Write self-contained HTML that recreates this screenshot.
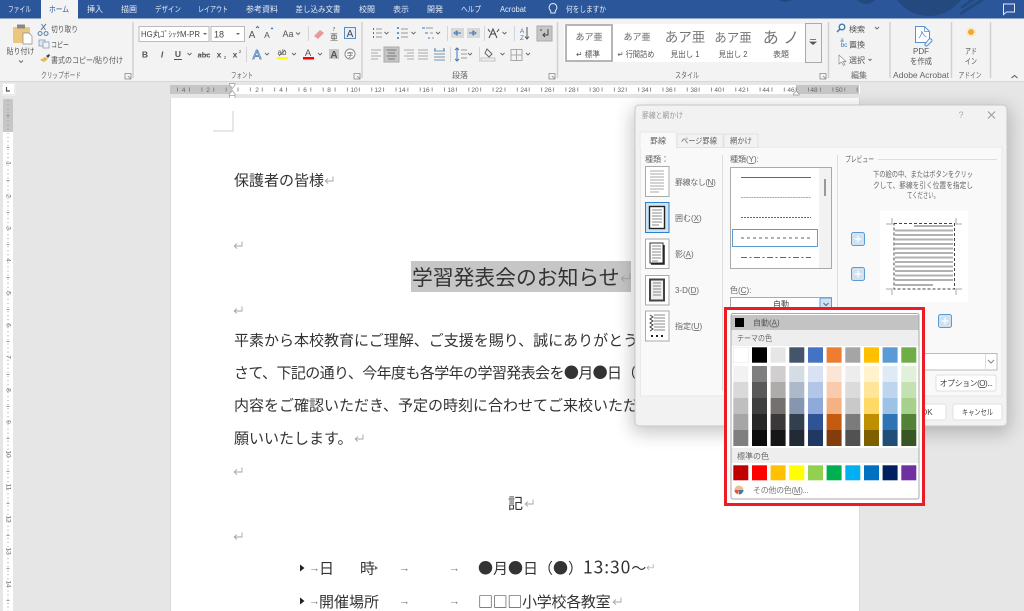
<!DOCTYPE html>
<html lang="ja"><head><meta charset="utf-8"><title>罫線と網かけ</title>
<style>
html,body{margin:0;padding:0;width:1024px;height:611px;overflow:hidden;background:#e6e6e6}
svg{display:block;font-family:"Liberation Sans","Noto Sans CJK JP",sans-serif;filter:blur(.3px)}
.tab{font-size:8px;fill:#e4eaf4;text-anchor:middle}
.r{font-size:8px;fill:#555}
.c{font-size:8px;fill:#555;text-anchor:middle}
.g{font-size:8px;fill:#666;text-anchor:middle}
.rn{font-size:6.5px;fill:#666;text-anchor:middle}
.b{font-size:15px;fill:#333;font-family:"Noto Sans CJK JP","Liberation Sans",sans-serif}
.d{font-size:8px;fill:#666}
.ic{fill:none;stroke:#6a7f9a;stroke-width:1}
.ch{fill:none;stroke:#666;stroke-width:.9}
.sep{stroke:#d4d4d4;stroke-width:1}
.gs{stroke:#d0d0d0;stroke-width:1.5}
.m{font-size:8px;fill:#666}
.ibx{fill:#fff;stroke:#aaa;stroke-width:1}
.ar{font-size:11px;fill:#777}
</style></head><body>
<svg width="1024" height="611" viewBox="0 0 1024 611" xmlns="http://www.w3.org/2000/svg">
<defs>
<pattern id="rt" x="232" y="85" width="24.27" height="9" patternUnits="userSpaceOnUse"><rect x="5.6" y="2.5" width=".8" height="4" fill="#777"/><rect x="18" y="2.5" width=".8" height="4" fill="#777"/></pattern>
<pattern id="vt" x="3" y="99" width="10" height="4.05" patternUnits="userSpaceOnUse"><rect x="4.5" y="1.5" width="1" height=".9" fill="#888"/></pattern>
<filter id="sh" x="-20%" y="-20%" width="140%" height="140%"><feGaussianBlur stdDeviation="9"/></filter>
<symbol id="ret" viewBox="0 0 10 10" overflow="visible"><path d="M9 1.5V6H1.2M4 3.4 1.2 6 4 8.6" fill="none" stroke="#a5a5a5" stroke-width=".9"/></symbol>
<symbol id="pv" viewBox="0 0 14 14"><rect x=".5" y=".5" width="13" height="13" rx="2" fill="#cfe2f3" stroke="#5b9bd5"/><path d="M3 3h8v8H3zM7 3v8M3 7h8" fill="none" stroke="#fff" stroke-width="1.2"/><path d="M3 3h8v8H3z" fill="none" stroke="#9db5cc" stroke-width=".5"/></symbol>
</defs>

<rect width="1024" height="611" fill="#e6e6e6"/>

<!-- title bar / tabs -->
<rect width="1024" height="18.5" fill="#2b579a"/>
<circle cx="929" cy="-24" r="40" fill="#24497f"/>
<circle cx="866" cy="-8" r="12" fill="#24497f"/>
<circle cx="785" cy="-10" r="12" fill="#24497f"/>
<path d="M985 -2 960 14M975 -2l-14 10" stroke="#24497f" stroke-width="3"/>
<rect x="41" y="0" width="37" height="19" fill="#f3f3f3"/>
<text x="19.500" y="12" class="tab" textLength="23" lengthAdjust="spacingAndGlyphs">ファイル</text>
<text x="59" y="12" class="tab" style="fill:#2b579a" textLength="20" lengthAdjust="spacingAndGlyphs">ホーム</text>
<text x="95" y="12" class="tab">挿入</text>
<text x="129" y="12" class="tab">描画</text>
<text x="168" y="12" class="tab" textLength="26" lengthAdjust="spacingAndGlyphs">デザイン</text>
<text x="213" y="12" class="tab" textLength="30" lengthAdjust="spacingAndGlyphs">レイアウト</text>
<text x="262" y="12" class="tab">参考資料</text>
<text x="318" y="12" class="tab" textLength="45" lengthAdjust="spacingAndGlyphs">差し込み文書</text>
<text x="367" y="12" class="tab">校閲</text>
<text x="401" y="12" class="tab">表示</text>
<text x="435" y="12" class="tab">開発</text>
<text x="471" y="12" class="tab" textLength="20" lengthAdjust="spacingAndGlyphs">ヘルプ</text>
<text x="513" y="12" class="tab" textLength="26" lengthAdjust="spacingAndGlyphs">Acrobat</text>
<path d="M553 3.500a4 4 0 0 1 2.500 7l-.5 2.500h-4l-.5-2.500a4 4 0 0 1 2.500-7z" fill="none" stroke="#e4eaf4"/>
<text x="566" y="12" class="tab" style="text-anchor:start" textLength="40" lengthAdjust="spacingAndGlyphs">何をしますか</text>
<path d="M1003.500 4h11v8h-8l-3 2.500z" fill="none" stroke="#e4eaf4"/>

<!-- ribbon -->
<rect y="18.500" width="1024" height="62.500" fill="#f3f3f3"/>
<rect y="81" width="1024" height="1" fill="#d8d8d8"/>

<!-- clipboard -->
<rect x="13" y="27" width="17" height="16" rx="1" fill="#ecc67f"/>
<rect x="17" y="24.500" width="8" height="4" fill="#888"/>
<path d="M23 33h6l3 3v8h-9z" fill="#fff" stroke="#888" stroke-width=".7"/>
<text x="20.500" y="54" class="c" textLength="28" lengthAdjust="spacingAndGlyphs">貼り付け</text>
<path d="M19 60.500l2 2 2-2" class="ch"/>
<path d="M40 31.500a2 2 0 1 0 .1 0zM46 31.500a2 2 0 1 0 .1 0M41 30l5-6M45.500 30l-4-6" fill="none" stroke="#5b7fa8"/>
<text x="51" y="32" class="r" textLength="27" lengthAdjust="spacingAndGlyphs">切り取り</text>
<rect x="39" y="40" width="6" height="6" fill="#dfe8f2" stroke="#7b93ad" stroke-width=".7"/><rect x="43" y="42" width="6" height="6" fill="#eef3f8" stroke="#7b93ad" stroke-width=".7"/>
<text x="51" y="47.500" class="r" textLength="18" lengthAdjust="spacingAndGlyphs">コピー</text>
<path d="M40 60l5-3 3 2-4 3z" fill="#e8b858"/><path d="M46 56l3-2 1 1.500-2 2.500z" fill="#444"/>
<text x="51" y="63" class="r" textLength="72" lengthAdjust="spacingAndGlyphs">書式のコピー/貼り付け</text>
<text x="61" y="78" class="g" textLength="40" lengthAdjust="spacingAndGlyphs">クリップボード</text>
<path d="M125 73.500h6v5.500h-6zM128 76l2.500 2.500" fill="none" stroke="#888" stroke-width=".8"/>
<line x1="133" y1="22" x2="133" y2="78" class="gs"/>

<!-- font -->
<rect x="139" y="26.500" width="70" height="15" fill="#fff" stroke="#bbb"/>
<text x="141" y="37" style="font-size:8px;fill:#444" textLength="59" lengthAdjust="spacingAndGlyphs">HG丸ｺﾞｼｯｸM-PR</text>
<path d="M203 33l2 2 2-2z" fill="#666"/>
<rect x="211" y="26.500" width="33.500" height="15" fill="#fff" stroke="#bbb"/>
<text x="214" y="37.500" style="font-size:9px;fill:#444">18</text>
<path d="M236 33l2 2 2-2z" fill="#666"/>
<text x="252" y="38" class="c" style="font-size:10px">A</text><path d="M256 28l1.500-1.500 1.500 1.500" stroke="#3a6ea5" fill="none"/>
<text x="267" y="38" class="c" style="font-size:8.5px">A</text><path d="M271 29l1-1 1 1" stroke="#3a6ea5" fill="none"/>
<text x="288" y="37" class="c" style="font-size:9px">Aa</text><path d="M296 32.500l2 2 2-2" class="ch"/>
<line x1="308.500" y1="26" x2="308.500" y2="41" class="sep"/>
<path d="M314 36l6-6 4 3-6 6z" fill="#e79a9a"/>
<text x="334" y="31" class="c" style="font-size:5px">ｱ</text><text x="334" y="40" class="c" style="font-size:8px">亜</text>
<rect x="344.500" y="27.500" width="11" height="11" fill="#e4eef8" stroke="#5b8ebf"/><text x="350" y="37" class="c" style="font-size:10px;fill:#444">A</text>
<text x="145" y="57.500" class="c" style="font-weight:bold;font-size:8.500px">B</text>
<text x="162" y="57.500" class="c" style="font-style:italic;font-weight:bold;font-size:8.500px">I</text>
<text x="178" y="57" class="c" style="font-weight:bold;font-size:8.500px">U</text><line x1="174" y1="59.500" x2="182" y2="59.500" stroke="#555"/>
<path d="M187.500 53l2 2 2-2" class="ch"/>
<text x="204" y="57.500" class="c" style="font-weight:bold;font-size:7.500px">abc</text><line x1="198" y1="54.500" x2="210" y2="54.500" stroke="#666" stroke-width=".7"/>
<text x="219" y="57.500" class="c" style="font-weight:bold;font-size:8.500px">x</text><text x="225" y="59" class="c" style="font-size:4.500px">2</text>
<text x="235" y="57.500" class="c" style="font-weight:bold;font-size:8.500px">x</text><text x="240" y="53" class="c" style="font-size:4.500px">2</text>
<line x1="246.500" y1="47" x2="246.500" y2="62" class="sep"/>
<text x="257" y="59" class="c" style="font-size:13px;fill:#fff;stroke:#4f81bd;stroke-width:.8">A</text><path d="M265 53l2 2 2-2" class="ch"/>
<text x="282" y="55" class="c" style="font-size:8px">ab</text><path d="M279 56l6-6" stroke="#555" stroke-width=".7"/><rect x="277" y="57" width="11" height="2.500" fill="#ff0"/><path d="M292 53l2 2 2-2" class="ch"/>
<text x="308" y="56" class="c" style="font-size:9.500px">A</text><rect x="303" y="57" width="11" height="2.500" fill="#f00"/><path d="M318 53l2 2 2-2" class="ch"/>
<rect x="329" y="49" width="10" height="10" fill="#c8c8c8"/><text x="334" y="58" class="c" style="font-size:10px;font-weight:bold;fill:#555">A</text>
<circle cx="350" cy="54" r="5" fill="#fff" stroke="#888"/><text x="350" y="57" class="c" style="font-size:6.500px">字</text>
<text x="242" y="78" class="g" textLength="22" lengthAdjust="spacingAndGlyphs">フォント</text>
<path d="M354 73.500h6v5.500h-6zM357 76l2.500 2.500" fill="none" stroke="#888" stroke-width=".8"/>
<line x1="362" y1="22" x2="362" y2="78" class="gs"/>

<!-- paragraph -->
<g stroke-width="1" fill="none">
<path d="M373 29h1M373 33h1M373 37h1" stroke="#3c78b4" stroke-width="2"/><path d="M376 29h6M376 33h6M376 37h6" stroke="#999"/>
<path d="M384.500 32l2 2 2-2" class="ch"/>
<path d="M397 28h2M397 33h2M397 38h2" stroke="#3c78b4" stroke-width="1.500"/><path d="M401 29h7M401 33h7M401 37h7" stroke="#999"/>
<path d="M411.500 32l2 2 2-2" class="ch"/>
<path d="M422 28h3M425 33h3M428 38h2" stroke="#3c78b4"/><path d="M426 28h7M430 33h3M432 38h2" stroke="#999"/>
<path d="M436 32l2 2 2-2" class="ch"/>
<rect x="451" y="28" width="13" height="10" fill="#d8d8d8"/><path d="M456 33h5M454 33l3-2v4z" stroke="#3c78b4"/>
<rect x="467" y="28" width="13" height="10" fill="#d8d8d8"/><path d="M469 33h5M476 33l-3-2v4z" stroke="#3c78b4"/>
<path d="M489 38l4-9 4 9M491 34h5M488 29l2 3M499 29l-2 3" stroke="#445"/>
<path d="M502.500 32l2 2 2-2" class="ch"/>
<line x1="447.500" y1="26" x2="447.500" y2="41" class="sep"/><line x1="484.500" y1="26" x2="484.500" y2="41" class="sep"/><line x1="514.500" y1="26" x2="514.500" y2="41" class="sep"/>
<path d="M527 27v12M525 36.500l2 2.500 2-2.500" stroke="#555"/>
</g>
<text x="522" y="33" class="c" style="font-size:6.500px;fill:#3c78b4">A</text><text x="522" y="40" class="c" style="font-size:6.500px;fill:#3c78b4">Z</text>
<rect x="537" y="26" width="15" height="15" fill="#c6c6c6" stroke="#aaa"/><path d="M548 29v6h-5M545 33l-2 2 2 2M541 29v2" fill="none" stroke="#444"/>
<rect x="384" y="47" width="15" height="15" fill="#c6c6c6" stroke="#aaa"/>
<g stroke="#a8a8a8" fill="none">
<path d="M371 50h10M371 53h7M371 56h10M371 59h7"/>
<path d="M386.500 50h10M388 53h7M386.500 56h10M388 59h7" stroke="#777"/>
<path d="M404 50h10M407 53h7M404 56h10M407 59h7"/>
<path d="M418 50h10M418 53h10M418 56h10M418 59h10"/>
<path d="M434 51h11M434 54h11M434 57h11M434 60h11" stroke="#7a93ad"/>
</g>
<path d="M435 48v3M444 48v3" stroke="#3c78b4"/>
<line x1="450.500" y1="47" x2="450.500" y2="62" class="sep"/>
<path d="M457 48v13M455 50l2-2 2 2M455 59l2 2 2-2" fill="none" stroke="#3c78b4"/><path d="M461 50h6M461 54h6M461 58h6" stroke="#999"/>
<path d="M468 53l2 2 2-2" class="ch"/>
<line x1="479.500" y1="47" x2="479.500" y2="62" class="sep"/>
<path d="M487 49l5 5-3 3-4-4z" fill="#f2f2f2" stroke="#666"/><path d="M481 58h14v3h-14z" fill="#eee" stroke="#c4c4c4"/>
<path d="M500.500 53l2 2 2-2" class="ch"/>
<path d="M511 49.500h11v11h-11zM516.500 49.500v11M511 55h11" fill="none" stroke="#aaa"/>
<path d="M526 53l2 2 2-2" class="ch"/>
<text x="460" y="78" class="g">段落</text>
<path d="M549 73.500h6v5.500h-6zM552 76l2.500 2.500" fill="none" stroke="#888" stroke-width=".8"/>
<line x1="557.500" y1="22" x2="557.500" y2="78" class="gs"/>

<!-- styles -->
<rect x="564" y="24" width="258" height="38" fill="#fff"/>
<rect x="566" y="25" width="46" height="36" fill="#fff" stroke="#b5b5b5" stroke-width="2"/>
<rect x="805.500" y="23.500" width="16" height="39" fill="#f3f3f3" stroke="#aaa"/>
<path d="M810 39.500h6M810 42l3 2.500 3-2.500z" fill="#555" stroke="#555" stroke-width=".8"/>
<text x="589" y="40" class="c" style="font-size:9px;fill:#666">あア亜</text>
<text x="637" y="40" class="c" style="font-size:9px;fill:#666">あア亜</text>
<text x="685" y="42" class="c" style="font-size:13.500px;fill:#777">あア亜</text>
<text x="733" y="42" class="c" style="font-size:12.500px;fill:#777">あア亜</text>
<text x="781" y="43" class="c" style="font-size:16px;fill:#777">あ ノ</text>
<text x="588" y="57" class="c" textLength="24" lengthAdjust="spacingAndGlyphs">↵ 標準</text>
<text x="636" y="57" class="c" textLength="37" lengthAdjust="spacingAndGlyphs">↵ 行間詰め</text>
<text x="685" y="57" class="c" textLength="29" lengthAdjust="spacingAndGlyphs">見出し 1</text>
<text x="733" y="57" class="c" textLength="29" lengthAdjust="spacingAndGlyphs">見出し 2</text>
<text x="781" y="57" class="c">表題</text>
<text x="687" y="78" class="g" textLength="24" lengthAdjust="spacingAndGlyphs">スタイル</text>
<path d="M820 73.500h6v5.500h-6zM823 76l2.500 2.500" fill="none" stroke="#888" stroke-width=".8"/>
<line x1="828.500" y1="22" x2="828.500" y2="78" class="gs"/>

<!-- editing -->
<circle cx="842" cy="27" r="2.800" fill="none" stroke="#3c78b4" stroke-width="1.300"/><path d="M840 29l-3 3" stroke="#3c78b4" stroke-width="1.500"/>
<text x="849" y="32" class="r">検索</text><path d="M875 27l2 2 2-2" class="ch"/>
<text x="842" y="42" class="c" style="font-size:6px;fill:#3c78b4">a</text><text x="844" y="47" class="c" style="font-size:6.500px;fill:#3c78b4">bc</text>
<text x="849" y="47.500" class="r">置換</text>
<path d="M839 55v9l2.500-2 2 3.500 1.500-1-2-3h3z" fill="#fff" stroke="#888" stroke-width=".7"/>
<text x="849" y="63" class="r">選択</text><path d="M868.500 59l1.500 1.500 1.500-1.500" class="ch"/>
<text x="859" y="78" class="g">編集</text>
<line x1="890" y1="22" x2="890" y2="78" class="gs"/>

<!-- pdf -->
<path d="M915.500 26.500h9l5 5v11h-14z" fill="#fff" stroke="#5b8fd0"/><path d="M924.500 26.500v5h5M919 38c2-2 3-6 2.500-7 1 2 2 5 5 6" fill="none" stroke="#5b8fd0" stroke-width=".8"/>
<path d="M925 44l4-5a2 2 0 0 1 3 2l-4 4a1.500 1.500 0 0 1-3-1z" fill="#f3f3f3" stroke="#5b8fd0"/>
<text x="921" y="54" class="c">PDF</text><text x="921" y="64" class="c" textLength="22" lengthAdjust="spacingAndGlyphs">を作成</text>
<text x="921" y="78" class="g" textLength="56" lengthAdjust="spacingAndGlyphs">Adobe Acrobat</text>
<line x1="951.500" y1="22" x2="951.500" y2="78" class="gs"/>

<!-- addin -->
<circle cx="971" cy="32" r="3" fill="#f5a623"/><circle cx="971" cy="32" r="4.200" fill="none" stroke="#f8cf88" stroke-dasharray="1 1"/>
<text x="971" y="54" class="c" textLength="12" lengthAdjust="spacingAndGlyphs">アド</text><text x="971" y="64" class="c" textLength="12" lengthAdjust="spacingAndGlyphs">イン</text>
<text x="970" y="78" class="g" textLength="23" lengthAdjust="spacingAndGlyphs">アドイン</text>
<line x1="990.500" y1="22" x2="990.500" y2="78" class="gs"/>
<path d="M1011.500 78l3-2.500 3 2.500" fill="none" stroke="#555"/>

<!-- rulers -->
<rect x="170" y="85" width="690" height="9" fill="#fff"/>
<rect x="170" y="85" width="62" height="9" fill="#c6c6c6"/>
<rect x="796" y="85" width="63" height="9" fill="#c6c6c6"/>
<rect x="171" y="85" width="688" height="9" fill="url(#rt)"/>
<text class="rn" x="183.500" y="92">4</text><text class="rn" x="208" y="92">2</text>
<text class="rn" x="257" y="92">2</text><text class="rn" x="281" y="92">4</text><text class="rn" x="305" y="92">6</text><text class="rn" x="329" y="92">8</text>
<text class="rn" x="354" y="92">10</text><text class="rn" x="378" y="92">12</text><text class="rn" x="402" y="92">14</text><text class="rn" x="426" y="92">16</text><text class="rn" x="451" y="92">18</text><text class="rn" x="475" y="92">20</text><text class="rn" x="499" y="92">22</text>
<text class="rn" x="524" y="92">24</text><text class="rn" x="548" y="92">26</text><text class="rn" x="572" y="92">28</text><text class="rn" x="596" y="92">30</text><text class="rn" x="621" y="92">32</text><text class="rn" x="645" y="92">34</text><text class="rn" x="669" y="92">36</text><text class="rn" x="694" y="92">38</text><text class="rn" x="718" y="92">40</text><text class="rn" x="742" y="92">42</text><text class="rn" x="766" y="92">44</text><text class="rn" x="791" y="92">46</text><text class="rn" x="814" y="92">48</text><text class="rn" x="839" y="92">50</text>
<path d="M229.500 83.500h5.500v1.500l-2.700 3.500-2.800-3.500zM229.500 94l2.800-3.500 2.700 3.500v5h-5.500z" fill="#fff" stroke="#999" stroke-width=".7"/>
<path d="M229.500 95.500h5.500" stroke="#999" stroke-width=".7"/>
<path d="M793.500 94l2.800-3 2.800 3v1h-5.600z" fill="#fff" stroke="#999" stroke-width=".7"/>

<rect x="2" y="83" width="14" height="13" fill="#ececec"/>
<rect x="3" y="84" width="11" height="10" fill="#fff"/>
<path d="M6.500 87v4h3.500" fill="none" stroke="#555" stroke-width="1.200"/>

<rect x="3" y="99" width="10" height="512" fill="#fff"/>
<rect x="3" y="99" width="10" height="33" fill="#c6c6c6"/>
<rect x="3" y="99" width="10" height="512" fill="url(#vt)"/>
<g fill="#888">
<rect x="6.500" y="115" width="3" height=".8"/><rect x="6.500" y="147" width="3" height=".8"/><rect x="6.500" y="180" width="3" height=".8"/><rect x="6.500" y="212" width="3" height=".8"/><rect x="6.500" y="244" width="3" height=".8"/><rect x="6.500" y="277" width="3" height=".8"/><rect x="6.500" y="309" width="3" height=".8"/><rect x="6.500" y="341" width="3" height=".8"/><rect x="6.500" y="374" width="3" height=".8"/><rect x="6.500" y="406" width="3" height=".8"/><rect x="6.500" y="438" width="3" height=".8"/><rect x="6.500" y="471" width="3" height=".8"/><rect x="6.500" y="503" width="3" height=".8"/><rect x="6.500" y="535" width="3" height=".8"/><rect x="6.500" y="568" width="3" height=".8"/><rect x="6.500" y="600" width="3" height=".8"/>
</g>
<text class="rn" transform="translate(6.500 163) rotate(90)" x="0" y="0">1</text>
<text class="rn" transform="translate(6.500 196) rotate(90)" x="0" y="0">2</text>
<text class="rn" transform="translate(6.500 228) rotate(90)" x="0" y="0">3</text>
<text class="rn" transform="translate(6.500 260) rotate(90)" x="0" y="0">4</text>
<text class="rn" transform="translate(6.500 293) rotate(90)" x="0" y="0">5</text>
<text class="rn" transform="translate(6.500 325) rotate(90)" x="0" y="0">6</text>
<text class="rn" transform="translate(6.500 357) rotate(90)" x="0" y="0">7</text>
<text class="rn" transform="translate(6.500 390) rotate(90)" x="0" y="0">8</text>
<text class="rn" transform="translate(6.500 422) rotate(90)" x="0" y="0">9</text>
<text class="rn" transform="translate(6.500 454) rotate(90)" x="0" y="0">10</text>
<text class="rn" transform="translate(6.500 487) rotate(90)" x="0" y="0">11</text>
<text class="rn" transform="translate(6.500 519) rotate(90)" x="0" y="0">12</text>
<text class="rn" transform="translate(6.500 551) rotate(90)" x="0" y="0">13</text>
<text class="rn" transform="translate(6.500 584) rotate(90)" x="0" y="0">14</text>

<!-- page -->
<rect x="170" y="98" width="690" height="513" fill="#d9d9d9"/>
<rect x="171" y="98" width="688" height="513" fill="#fff"/>
<path d="M213 131h20V111" fill="none" stroke="#cfcfcf"/>

<text x="234" y="185.500" class="b">保護者の皆様</text>
<use href="#ret" x="324" y="175" width="10" height="10"/>
<use href="#ret" x="233" y="240" width="10" height="10"/>
<rect x="411" y="261" width="220" height="31" fill="#c6c6c6"/>
<text x="412" y="285" class="b" style="font-size:20.800px">学習発表会のお知らせ</text>
<use href="#ret" x="620" y="272" width="11" height="11"/>
<use href="#ret" x="233" y="305" width="10" height="10"/>
<text x="234" y="345.500" class="b">平素から本校教育にご理解、ご支援を賜り、誠にありがとう</text>
<text x="234" y="378" class="b" style="letter-spacing:-.6px">さて、下記の通り、今年度も各学年の学習発表会を●月●日（</text>
<text x="234" y="410.500" class="b">内容をご確認いただき、予定の時刻に合わせてご来校いただ</text>
<text x="234" y="443.500" class="b">願いいたします。</text>
<use href="#ret" x="354" y="433" width="10" height="10"/>
<use href="#ret" x="233" y="466" width="10" height="10"/>
<text x="508" y="508.500" class="b">記</text>
<use href="#ret" x="524" y="498" width="10" height="10"/>
<use href="#ret" x="233" y="531" width="10" height="10"/>
<path d="M300 564.500l4.500 3.500-4.500 3.500z" fill="#222"/>
<text x="309" y="571.500" class="ar">→</text>
<text x="319" y="573.500" class="b">日</text><text x="360" y="573.500" class="b">時</text>
<path d="M375 566l3 2-3 2z" fill="#666"/>
<text x="399" y="571.500" class="ar">→</text>
<text x="449" y="571.500" class="ar">→</text>
<text x="478" y="573.500" class="b">●月●日（●）<tspan style="font-size:17.500px;letter-spacing:.9px">13:30</tspan>〜</text>
<use href="#ret" x="646" y="563" width="8" height="8"/>
<path d="M300 597.500l4.500 3.500-4.500 3.500z" fill="#222"/>
<text x="309" y="604.500" class="ar">→</text>
<text x="319" y="607" class="b">開催場所</text>
<text x="399" y="604.500" class="ar">→</text>
<text x="449" y="604.500" class="ar">→</text>
<text x="478" y="607" class="b" style="letter-spacing:-.3px">□□□小学校各教室</text>
<use href="#ret" x="612" y="596" width="10" height="10"/>

<!-- dialog -->
<rect x="632" y="108" width="378" height="325" rx="6" fill="#000" opacity=".22" filter="url(#sh)"/>
<rect x="635" y="105" width="372" height="321" rx="4" fill="#f2f2f2" stroke="#c8c8c8"/>
<text x="642" y="118" style="font-size:8px;fill:#999" textLength="41" lengthAdjust="spacingAndGlyphs">罫線と網かけ</text>
<text x="961" y="118" style="font-size:9px;fill:#aaa;text-anchor:middle">?</text>
<path d="M988 111.500l7 7M995 111.500l-7 7" stroke="#999" fill="none"/>
<rect x="640.500" y="147" width="361.500" height="249" fill="#f9f9f9" stroke="#e8e8e8"/>
<rect x="677" y="134" width="46" height="13.500" fill="#f2f2f2" stroke="#e2e2e2"/>
<rect x="724" y="134" width="34" height="13.500" fill="#f2f2f2" stroke="#e2e2e2"/>
<rect x="640" y="132" width="36.500" height="16" fill="#f9f9f9" stroke="#e8e8e8"/>
<rect x="640.500" y="146" width="35.500" height="3" fill="#f9f9f9"/>
<text x="658" y="143.500" class="d" style="text-anchor:middle">罫線</text>
<text x="699" y="143.500" class="d" style="text-anchor:middle" textLength="36" lengthAdjust="spacingAndGlyphs">ページ罫線</text>
<text x="741" y="143.500" class="d" style="text-anchor:middle" textLength="22" lengthAdjust="spacingAndGlyphs">網かけ</text>

<text x="645" y="162" class="d">種類：</text>
<rect x="645.500" y="166.500" width="23.500" height="30" class="ibx"/>
<path d="M650 171h14M650 174h14M650 177h14M650 180h14M650 183h14M650 186h14M650 189h14M650 192h9" stroke="#aaa"/>
<rect x="645.500" y="202.500" width="23.500" height="30" fill="#cce4f7" stroke="#2f80c8"/>
<rect x="649.500" y="206.500" width="15" height="22" fill="#fff" stroke="#222" stroke-width="1.400"/>
<path d="M652 210h10M652 213h10M652 216h10M652 219h10M652 222h10M652 225h7" stroke="#888"/>
<rect x="645.500" y="239" width="23.500" height="29.500" class="ibx"/>
<rect x="650" y="243" width="13" height="20" fill="#fff" stroke="#333"/><path d="M651 264h13V245" fill="none" stroke="#222" stroke-width="1.500"/>
<path d="M652 246h9M652 249h9M652 252h9M652 255h9M652 258h9M652 261h6" stroke="#888"/>
<rect x="645.500" y="275.500" width="23.500" height="29.500" class="ibx"/>
<rect x="650" y="279.500" width="14" height="21" fill="#eee" stroke="#444" stroke-width="2"/>
<path d="M653 283h8M653 286h8M653 289h8M653 292h8M653 295h8" stroke="#888"/>
<rect x="645.500" y="311" width="23.500" height="30" class="ibx"/>
<path d="M650 315l3 2-3 2 3 2-3 2 3 2-3 2 3 2-3 2" fill="none" stroke="#444"/>
<path d="M654 315h11M654 318h11M654 321h11M654 324h11M654 327h11M654 330h11" stroke="#888"/>
<path d="M651 336h2M656 336h2M661 336h2" stroke="#222" stroke-width="2"/>
<text x="675" y="185" class="d" style="letter-spacing:-.4px">罫線なし(<tspan text-decoration="underline">N</tspan>)</text>
<text x="675" y="221" class="d">囲む(<tspan text-decoration="underline">X</tspan>)</text>
<text x="675" y="257" class="d">影(<tspan text-decoration="underline">A</tspan>)</text>
<text x="675" y="293" class="d">3-D(<tspan text-decoration="underline">D</tspan>)</text>
<text x="675" y="329" class="d">指定(<tspan text-decoration="underline">U</tspan>)</text>
<line x1="722.500" y1="155" x2="722.500" y2="391" stroke="#ddd"/>
<line x1="837.500" y1="155" x2="837.500" y2="391" stroke="#ddd"/>

<text x="730" y="162" class="d">種類(<tspan text-decoration="underline">Y</tspan>):</text>
<rect x="730.500" y="167.500" width="101" height="101" fill="#fff" stroke="#aaa"/>
<rect x="819" y="168" width="12" height="100" fill="#f2f2f2"/>
<rect x="824" y="179" width="2" height="17" fill="#999"/>
<line x1="741" y1="177.500" x2="811" y2="177.500" stroke="#666"/>
<line x1="741" y1="197.500" x2="811" y2="197.500" stroke="#aaa" stroke-dasharray="2 .6"/>
<line x1="741" y1="217.500" x2="811" y2="217.500" stroke="#666" stroke-dasharray="2 1"/>
<rect x="732.500" y="229.500" width="85" height="17" fill="#fff" stroke="#5b9bd5"/>
<line x1="741" y1="238" x2="811" y2="238" stroke="#666" stroke-dasharray="3 3"/>
<line x1="741" y1="257.500" x2="811" y2="257.500" stroke="#666" stroke-dasharray="6 2.500 2 2.500"/>

<text x="730" y="293" class="d">色(<tspan text-decoration="underline">C</tspan>):</text>
<rect x="730.500" y="297.500" width="101" height="16" fill="#fff" stroke="#aaa"/>
<text x="781" y="307" class="d" style="text-anchor:middle;fill:#444">自動</text>
<rect x="820" y="298" width="11.500" height="14" rx="1" fill="#cfe2f3" stroke="#5b9bd5"/>
<path d="M823.500 303l2.500 2.500 2.500-2.500" fill="none" stroke="#666"/>

<text x="845" y="162" class="d" textLength="29" lengthAdjust="spacingAndGlyphs">プレビュー</text>
<line x1="878" y1="159.500" x2="997" y2="159.500" stroke="#ddd"/>
<text x="923" y="177" class="d" style="text-anchor:middle" textLength="100" lengthAdjust="spacingAndGlyphs">下の絵の中、またはボタンをクリッ</text>
<text x="923" y="188" class="d" style="text-anchor:middle" textLength="100" lengthAdjust="spacingAndGlyphs">クして、罫線を引く位置を指定し</text>
<text x="923" y="198" class="d" style="text-anchor:middle" textLength="32" lengthAdjust="spacingAndGlyphs">てください。</text>
<rect x="880" y="211" width="88" height="91" fill="#fff"/>
<path d="M892 218v6h-6M956 218v6h6M892 295v-6h-6M956 295v-6h6" fill="none" stroke="#aaa"/>
<rect x="894" y="223.500" width="60.500" height="65.500" fill="none" stroke="#444" stroke-dasharray="3 2"/>
<g stroke="#b0b0b0" stroke-width="2">
<path d="M914 226h39M895 230.500h58M895 235h58M895 239.500h58M895 244h58M895 248.500h58M895 253h58M895 257.500h58M895 262h58M895 266.500h58M895 271h58M895 275.500h58M895 280h58M895 285h38"/>
</g>
<use href="#pv" x="851" y="232" width="14" height="14"/>
<use href="#pv" x="851" y="267" width="14" height="14"/>
<use href="#pv" x="938" y="314" width="14" height="14"/>

<rect x="860" y="353.500" width="137" height="16.500" fill="#fff" stroke="#bbb"/>
<line x1="985.500" y1="354" x2="985.500" y2="370" stroke="#ddd"/>
<path d="M988 360l3 3 3-3" fill="none" stroke="#888"/>
<rect x="936" y="375" width="60" height="16" rx="2" fill="#fff" stroke="#e0e0e0"/>
<text x="966" y="386" class="d" style="text-anchor:middle;fill:#444;letter-spacing:-.5px">オプション(<tspan text-decoration="underline">O</tspan>)...</text>
<rect x="880" y="404" width="66" height="16" rx="2" fill="#fff" stroke="#e0e0e0"/>
<text x="921" y="415" class="d" style="fill:#444">OK</text>
<rect x="953" y="404" width="49" height="16" rx="2" fill="#fff" stroke="#e0e0e0"/>
<text x="977.500" y="415" class="d" style="text-anchor:middle;fill:#444" textLength="31" lengthAdjust="spacingAndGlyphs">キャンセル</text>

<!-- color menu -->
<rect x="725.500" y="308.500" width="198" height="196" fill="#fff" stroke="#ed1c24" stroke-width="3"/>
<rect x="731" y="313.500" width="188" height="185.500" rx="2" fill="#fff" stroke="#a8a8a8"/>
<rect x="731.500" y="315" width="187" height="15" fill="#c3c3c3"/>
<rect x="735" y="318" width="9" height="9" fill="#000"/>
<text x="753" y="325.500" class="m" style="fill:#555">自動(<tspan text-decoration="underline">A</tspan>)</text>
<rect x="731.500" y="330" width="187" height="16" fill="#eeeeee"/>
<text x="737" y="341" class="m" textLength="35" lengthAdjust="spacingAndGlyphs">テーマの色</text>

<rect x="733.300" y="347.300" width="15.400" height="15.400" fill="#fff" stroke="#e4e4e4" stroke-width=".5"/>
<rect x="752" y="347.300" width="15" height="15.400" fill="#000"/>
<rect x="770.600" y="347.300" width="15" height="15.400" fill="#e7e6e6"/>
<rect x="789.300" y="347.300" width="15" height="15.400" fill="#44546a"/>
<rect x="808" y="347.300" width="15" height="15.400" fill="#4472c4"/>
<rect x="826.600" y="347.300" width="15" height="15.400" fill="#ed7d31"/>
<rect x="845.300" y="347.300" width="15" height="15.400" fill="#a5a5a5"/>
<rect x="864" y="347.300" width="15" height="15.400" fill="#ffc000"/>
<rect x="882.600" y="347.300" width="15" height="15.400" fill="#5b9bd5"/>
<rect x="901.300" y="347.300" width="15" height="15.400" fill="#70ad47"/>

<g>
<g transform="translate(733.300 366)"><rect width="15" height="16" fill="#f2f2f2"/><rect y="16" width="15" height="16" fill="#d9d9d9"/><rect y="32" width="15" height="16" fill="#bfbfbf"/><rect y="48" width="15" height="16" fill="#a6a6a6"/><rect y="64" width="15" height="16" fill="#7f7f7f"/></g>
<g transform="translate(752 366)"><rect width="15" height="16" fill="#7f7f7f"/><rect y="16" width="15" height="16" fill="#595959"/><rect y="32" width="15" height="16" fill="#3f3f3f"/><rect y="48" width="15" height="16" fill="#262626"/><rect y="64" width="15" height="16" fill="#0d0d0d"/></g>
<g transform="translate(770.600 366)"><rect width="15" height="16" fill="#d0cece"/><rect y="16" width="15" height="16" fill="#aeabab"/><rect y="32" width="15" height="16" fill="#757070"/><rect y="48" width="15" height="16" fill="#3a3838"/><rect y="64" width="15" height="16" fill="#171616"/></g>
<g transform="translate(789.300 366)"><rect width="15" height="16" fill="#d6dce4"/><rect y="16" width="15" height="16" fill="#adb9ca"/><rect y="32" width="15" height="16" fill="#8496b0"/><rect y="48" width="15" height="16" fill="#323f4f"/><rect y="64" width="15" height="16" fill="#222a35"/></g>
<g transform="translate(808 366)"><rect width="15" height="16" fill="#d9e2f3"/><rect y="16" width="15" height="16" fill="#b4c6e7"/><rect y="32" width="15" height="16" fill="#8eaadb"/><rect y="48" width="15" height="16" fill="#2f5496"/><rect y="64" width="15" height="16" fill="#1f3864"/></g>
<g transform="translate(826.600 366)"><rect width="15" height="16" fill="#fbe5d5"/><rect y="16" width="15" height="16" fill="#f7cbac"/><rect y="32" width="15" height="16" fill="#f4b183"/><rect y="48" width="15" height="16" fill="#c55a11"/><rect y="64" width="15" height="16" fill="#833c0b"/></g>
<g transform="translate(845.300 366)"><rect width="15" height="16" fill="#ededed"/><rect y="16" width="15" height="16" fill="#dbdbdb"/><rect y="32" width="15" height="16" fill="#c9c9c9"/><rect y="48" width="15" height="16" fill="#7b7b7b"/><rect y="64" width="15" height="16" fill="#525252"/></g>
<g transform="translate(864 366)"><rect width="15" height="16" fill="#fff2cc"/><rect y="16" width="15" height="16" fill="#fee599"/><rect y="32" width="15" height="16" fill="#ffd965"/><rect y="48" width="15" height="16" fill="#bf8f00"/><rect y="64" width="15" height="16" fill="#7f6000"/></g>
<g transform="translate(882.600 366)"><rect width="15" height="16" fill="#deeaf6"/><rect y="16" width="15" height="16" fill="#bdd6ee"/><rect y="32" width="15" height="16" fill="#9cc2e5"/><rect y="48" width="15" height="16" fill="#2e74b5"/><rect y="64" width="15" height="16" fill="#1f4e79"/></g>
<g transform="translate(901.300 366)"><rect width="15" height="16" fill="#e2efd9"/><rect y="16" width="15" height="16" fill="#c5e0b3"/><rect y="32" width="15" height="16" fill="#a8d08d"/><rect y="48" width="15" height="16" fill="#538135"/><rect y="64" width="15" height="16" fill="#375623"/></g>
</g>

<rect x="731.500" y="448" width="187" height="15" fill="#eeeeee"/>
<text x="737" y="459" class="m">標準の色</text>
<rect x="733.300" y="465.300" width="15" height="15" fill="#c00000"/>
<rect x="752" y="465.300" width="15" height="15" fill="#ff0000"/>
<rect x="770.600" y="465.300" width="15" height="15" fill="#ffc000"/>
<rect x="789.300" y="465.300" width="15" height="15" fill="#ffff00"/>
<rect x="808" y="465.300" width="15" height="15" fill="#92d050"/>
<rect x="826.600" y="465.300" width="15" height="15" fill="#00b050"/>
<rect x="845.300" y="465.300" width="15" height="15" fill="#00b0f0"/>
<rect x="864" y="465.300" width="15" height="15" fill="#0070c0"/>
<rect x="882.600" y="465.300" width="15" height="15" fill="#002060"/>
<rect x="901.300" y="465.300" width="15" height="15" fill="#7030a0"/>

<circle cx="739" cy="490" r="4.500" fill="#e8c090"/>
<path d="M739 490l-4.500 0a4.500 4.500 0 0 0 3 4z" fill="#d9534f"/><path d="M739 490l0 4.500a4.500 4.500 0 0 0 4.500-4.500z" fill="#3c78b4"/>
<text x="753" y="493" class="m" style="fill:#777;letter-spacing:-.3px">その他の色(<tspan text-decoration="underline">M</tspan>)...</text>
</svg>
</body></html>
